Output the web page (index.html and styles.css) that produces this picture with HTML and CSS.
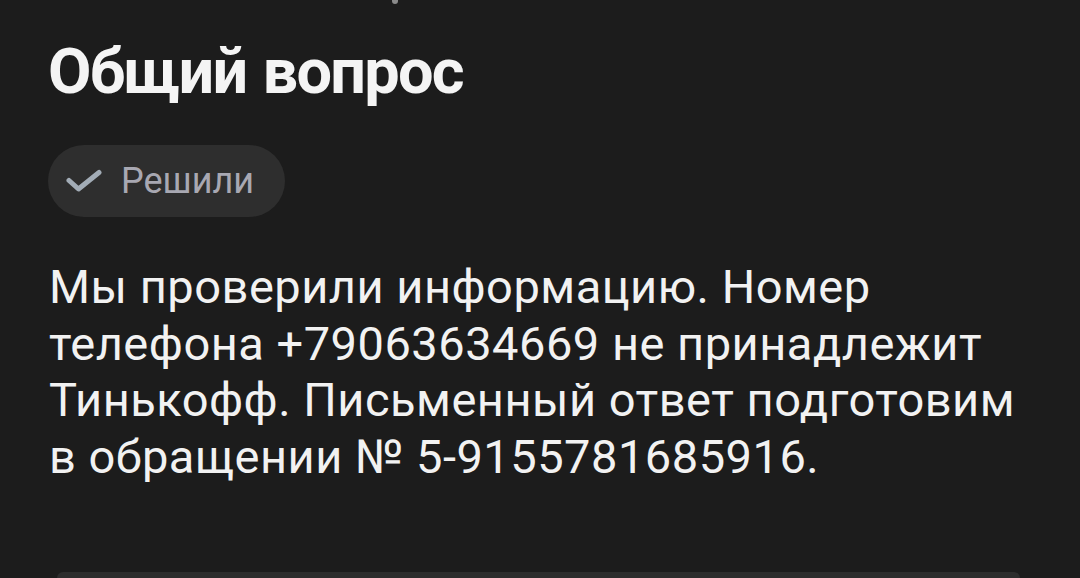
FILE: index.html
```html
<!DOCTYPE html>
<html lang="ru">
<head>
<meta charset="utf-8">
<link rel="stylesheet" href="styles.css">
</head>
<body>
<div class="page">
  <div class="top-mark" aria-hidden="true"></div>
  <h1 class="title">Общий вопрос</h1>
  <div class="chip">
    <svg class="chip-icon" viewBox="0 0 36 24" width="36" height="24" aria-hidden="true">
      <path d="M3 11.5 L12.5 20 L33 3.5" fill="none" stroke="#a2acb6" stroke-width="5" stroke-linecap="round" stroke-linejoin="round"/>
    </svg>
    <span class="chip-text">Решили</span>
  </div>
  <p class="message">Мы проверили информацию. Номер телефона +79063634669 не принадлежит Тинькофф. Письменный ответ подготовим в обращении № 5-9155781685916.</p>
  <div class="card"></div>
</div>
</body>
</html>
```

FILE: styles.css
```css
html, body {
  margin: 0;
  padding: 0;
  background: #1c1c1c;
  height: 100%;
  overflow: hidden;
}
.page {
  position: relative;
  padding: 0 0 0 49px;
  height: 578px;
  box-sizing: border-box;
  display: flex;
  flex-direction: column;
  align-items: flex-start;
  overflow: hidden;
}
.top-mark {
  position: absolute;
  left: 392px;
  top: 0;
  width: 6px;
  height: 4px;
  border-radius: 0 0 3px 3px;
  background: #8a8a8a;
}
.title {
  margin: 32px 0 0 -1px;
  font-family: Roboto, sans-serif;
  font-weight: 700;
  font-size: 63px;
  line-height: 80px;
  color: #f4f4f4;
  letter-spacing: -1.7px;
  word-spacing: 2px;
}
.chip {
  margin-top: 33px;
  margin-left: -1px;
  height: 72px;
  padding: 0 31px 0 18px;
  border-radius: 36px;
  background: #2e2e2e;
  display: flex;
  align-items: center;
  gap: 19px;
  box-sizing: border-box;
}
.chip-icon {
  display: block;
}
.chip-text {
  font-family: Roboto, sans-serif;
  font-size: 36px;
  color: #a8a8b2;
}
.message {
  margin: 42px 0 0 0;
  width: 990px;
  font-family: Roboto, sans-serif;
  font-size: 47px;
  letter-spacing: 0.5px;
  line-height: 56.5px;
  color: #f2f2f2;
}
.card {
  position: absolute;
  left: 57px;
  right: 60px;
  top: 572px;
  height: 6px;
  border-radius: 12px 12px 0 0;
  background: #2d2d2d;
}
```
